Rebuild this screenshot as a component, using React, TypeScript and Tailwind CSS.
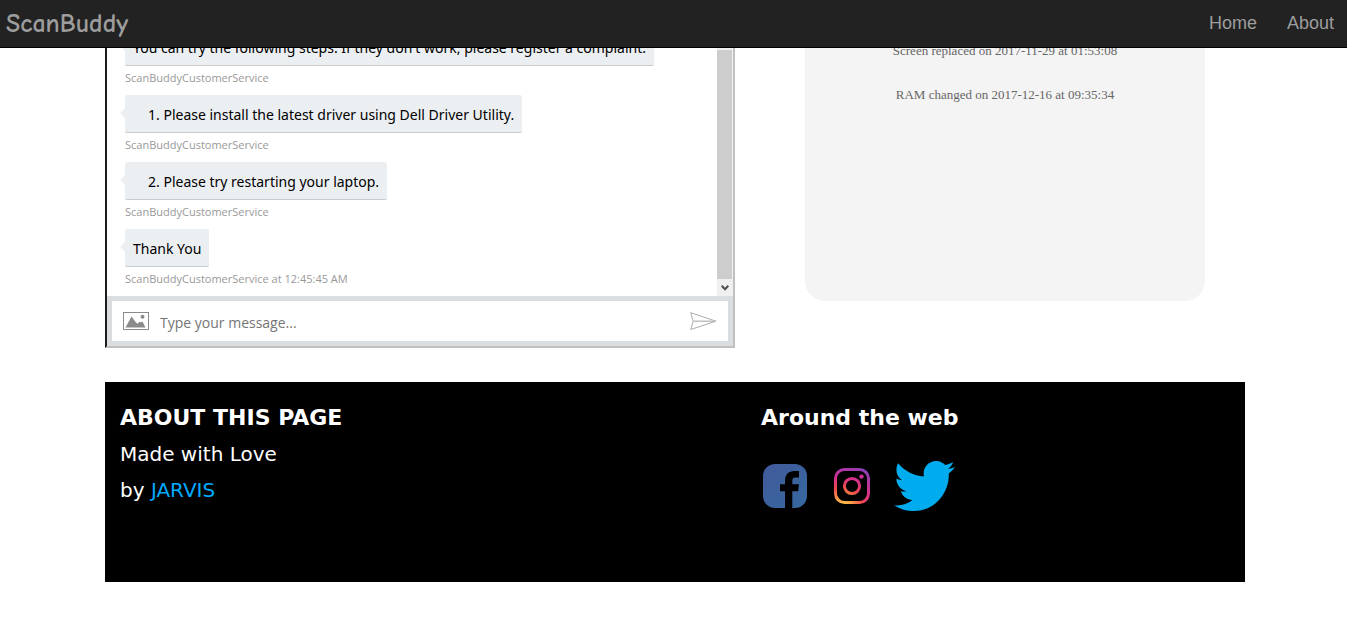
import React from "react";

type Message = { text: string; number?: number; time?: string };

const sender = "ScanBuddyCustomerService";

const messages: Message[] = [
  { text: "You can try the following steps. If they don't work, please register a complaint." },
  { text: "Please install the latest driver using Dell Driver Utility.", number: 1 },
  { text: "Please try restarting your laptop.", number: 2 },
  { text: "Thank You", time: "12:45:45 AM" },
];

const history = ["Screen replaced on 2017-11-29 at 01:53:08", "RAM changed on 2017-12-16 at 09:35:34"];

function Header() {
  return (
    <header className="sticky top-0 z-10 flex h-12 items-center justify-between border-b border-black bg-[#222222] px-[6px] text-[#9d9d9d]">
      <a href="#top" className="font-['Comic_Sans_MS','Comic_Neue','Lato',cursive] text-[26px] font-bold leading-8">
        ScanBuddy
      </a>
      <nav className="flex gap-[30px] pb-[2px] pr-[7px] font-['Liberation_Sans',sans-serif] text-lg leading-6">
        <a href="#home">Home</a>
        <a href="#about">About</a>
      </nav>
    </header>
  );
}

function Bubble({ message }: { message: Message }) {
  return (
    <li className="flex shrink-0 flex-col items-start">
      <div className="relative h-[38px] whitespace-nowrap rounded-[2px] border-b border-[#c8cbce] bg-[#eceff2] px-2 font-['Segoe_UI','Noto_Sans',sans-serif] text-[14px] leading-10 text-black">
        <span className="absolute -left-[5px] top-[13px] border-y-[5px] border-r-[5px] border-y-transparent border-r-[#eceff2]" />
        {message.number ? <span className="pl-[15px]">{message.number}. </span> : null}
        {message.text}
      </div>
      <div className="h-[29px] text-[11px] leading-6 text-[#999999]">
        {sender}
        {message.time ? ` at ${message.time}` : ""}
      </div>
    </li>
  );
}

function PictureIcon() {
  return (
    <svg width="26" height="18" viewBox="0 0 26 18" aria-hidden="true">
      <rect x="0.5" y="0.5" width="25" height="17" fill="#fff" stroke="#8a8a8a" />
      <path d="M2.500 15.500 8.500 4.500l4.500 6 1.500 1.300 2.500-2.300 1 1 1.500-1 3 6z" fill="#8a8a8a" />
      <circle cx="19.500" cy="4.800" r="2" fill="#8a8a8a" />
    </svg>
  );
}

function SendIcon() {
  return (
    <svg width="27" height="18" viewBox="0 0 27 18" aria-hidden="true" fill="none" stroke="#a3a3a3">
      <path d="M.7.7 26 9.2.7 17.5 3.2 9.2z" strokeWidth="0.9" />
      <path d="M3.2 9.2H26" stroke="#bdbdbd" strokeWidth="1.4" />
    </svg>
  );
}

function Chat() {
  return (
    <section className="border-2 border-t-0 border-l-[#1a1c1e] border-r-[#c0c0c0] border-b-[#c0c0c0] font-['Segoe_UI','Open_Sans',sans-serif]">
      <div className="flex h-[248px]">
        <ul className="flex min-w-0 grow flex-col justify-end overflow-hidden pl-[18px]">
          {messages.map((m) => (
            <Bubble key={m.text} message={m} />
          ))}
        </ul>
        <div className="flex w-4 shrink-0 flex-col bg-[#f0f0f0] pt-[2px]" aria-hidden="true">
          <div className="mr-px grow bg-[#cdcdcd]" />
          <div className="flex h-[17px] items-center justify-center">
            <svg width="8" height="6" viewBox="0 0 8 6" fill="none" stroke="#505050" strokeWidth="2">
              <path d="M.7.8 4 4.2 7.3.8" />
            </svg>
          </div>
        </div>
      </div>
      <form className="bg-[#dadee1] p-[5px]" onSubmit={(e) => e.preventDefault()}>
        <div className="flex h-10 items-center bg-white px-[11px]">
          <button type="button" aria-label="Upload picture">
            <PictureIcon />
          </button>
          <input
            type="text"
            aria-label="Message"
            placeholder="Type your message..."
            className="ml-[11px] mt-[3px] min-w-0 grow text-[14px] leading-6 outline-none placeholder:text-[#757575]"
          />
          <button type="submit" aria-label="Send">
            <SendIcon />
          </button>
        </div>
      </form>
    </section>
  );
}

function History() {
  return (
    <aside className="flex h-[253px] flex-col overflow-hidden rounded-b-[20px] bg-[#f4f4f4] text-center font-['Liberation_Serif',serif] text-[13px] leading-[22px] text-[#666666]">
      <div className="-mt-2 flex flex-col gap-[22px]">
        {history.map((h) => (
          <p key={h}>{h}</p>
        ))}
      </div>
    </aside>
  );
}

function FacebookIcon() {
  return (
    <svg width="44" height="44" viewBox="0 0 44 44" aria-hidden="true">
      <defs>
        <linearGradient id="fb" x1="0" y1="0" x2="1" y2="1">
          <stop offset="0" stopColor="#425a9b" />
          <stop offset="1" stopColor="#35699f" />
        </linearGradient>
      </defs>
      <rect width="44" height="44" rx="12" fill="url(#fb)" />
      <path d="M22 44V27.300h-5v-7h5V17c0-6.500 3.500-10 9.500-10H36v6.500h-3.500c-2.500 0-3.200 1.200-3.200 3.300v3.500H36l-.9 7h-5.800V44z" fill="#000" />
    </svg>
  );
}

function InstagramIcon() {
  return (
    <svg width="36" height="36" viewBox="0 0 36 36" aria-hidden="true">
      <defs>
        <radialGradient id="ig" gradientUnits="userSpaceOnUse" cx="9" cy="38" r="42">
          <stop offset="0" stopColor="#fdc34c" />
          <stop offset="0.2" stopColor="#fba244" />
          <stop offset="0.45" stopColor="#f0494e" />
          <stop offset="0.68" stopColor="#d8308b" />
          <stop offset="1" stopColor="#8a3fb8" />
        </radialGradient>
      </defs>
      <g fill="none" stroke="url(#ig)">
        <rect x="1.500" y="1.500" width="33" height="33" rx="9" strokeWidth="3" />
        <circle cx="18" cy="18" r="7.600" strokeWidth="3" />
      </g>
      <circle cx="27.500" cy="8.600" r="2.200" fill="#cf2f98" />
    </svg>
  );
}

function TwitterIcon() {
  return (
    <svg width="61" height="50" viewBox="0 2.25 24 19.5" preserveAspectRatio="none" fill="#00aced" aria-hidden="true">
      <path d="M23.954 4.569c-.885.389-1.83.654-2.825.775 1.014-.611 1.794-1.574 2.163-2.723-.951.555-2.005.959-3.127 1.184-.896-.959-2.173-1.559-3.591-1.559-2.717 0-4.92 2.203-4.92 4.917 0 .39.045.765.127 1.124C7.691 8.094 4.066 6.13 1.64 3.161c-.427.722-.666 1.561-.666 2.475 0 1.71.87 3.213 2.188 4.096-.807-.026-1.566-.248-2.228-.616v.061c0 2.385 1.693 4.374 3.946 4.827-.413.111-.849.171-1.296.171-.314 0-.615-.03-.916-.086.631 1.953 2.445 3.377 4.604 3.417-1.68 1.319-3.809 2.105-6.102 2.105-.39 0-.779-.023-1.17-.067 2.189 1.394 4.768 2.209 7.557 2.209 9.054 0 13.999-7.496 13.999-13.986 0-.209 0-.42-.015-.63.961-.689 1.8-1.56 2.46-2.548l-.047-.02z" />
    </svg>
  );
}

function Footer() {
  return (
    <footer className="mt-[34px] grid min-h-[200px] grid-cols-[641fr_499fr] bg-black pt-[18px] font-['Verdana','DejaVu_Sans',sans-serif] text-xl leading-9 text-white">
      <div className="px-[15px]">
        <h2 className="text-[22px] font-bold">ABOUT THIS PAGE</h2>
        <p>Made with Love</p>
        <p>
          by{" "}
          <a href="#jarvis" className="text-[#00aaff]">
            JARVIS
          </a>
        </p>
      </div>
      <div className="px-[15px]">
        <h2 className="text-[22px] font-bold">Around the web</h2>
        <div className="mt-[25px] flex items-center pl-[2px]">
          <a href="#facebook" aria-label="Facebook">
            <FacebookIcon />
          </a>
          <a href="#instagram" aria-label="Instagram" className="ml-[27px]">
            <InstagramIcon />
          </a>
          <a href="#twitter" aria-label="Twitter" className="ml-6">
            <TwitterIcon />
          </a>
        </div>
      </div>
    </footer>
  );
}

export default function App() {
  return (
    <div id="top" className="min-h-screen bg-white">
      <Header />
      <div className="pl-[3px]">
        <div className="mx-auto max-w-[1140px]">
          <main className="grid grid-cols-[63fr_40fr] items-start gap-[70px] pr-10">
            <Chat />
            <History />
          </main>
          <Footer />
        </div>
      </div>
    </div>
  );
}
